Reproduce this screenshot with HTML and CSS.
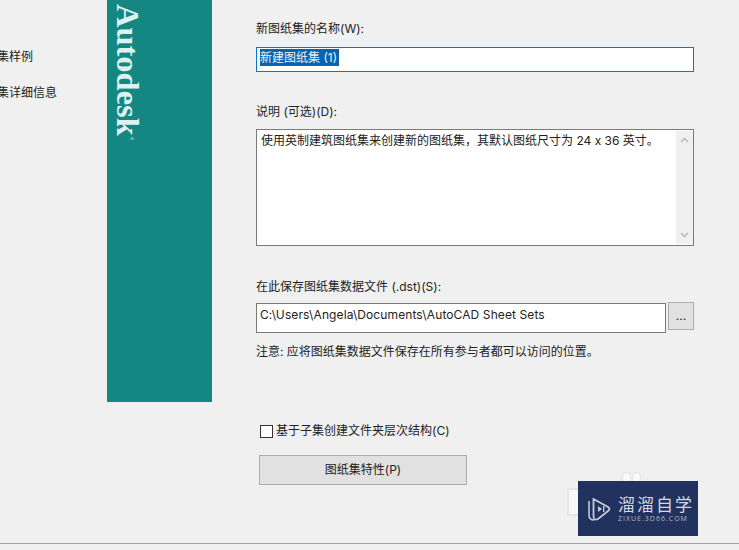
FILE: index.html
```html
<!DOCTYPE html>
<html lang="zh">
<head>
    <meta charset="UTF-8">
    <meta name="viewport" content="width=device-width, initial-scale=1.0">
    <title>创建图纸集</title>
    <link rel="stylesheet" href="styles.css">
</head>
<body>
    <div class="dialog">
        <div class="steps">
            <div class="step step-first">图纸集样例</div>
            <div class="step">图纸集详细信息</div>
        </div>

        <div class="banner">
            <span class="brand">Autodesk<sup class="reg">®</sup></span>
        </div>

        <div class="form">
            <label class="field-label label-name">新图纸集的名称(W):</label>
            <div class="name-input"><span class="selected">新建图纸集 (1)</span></div>

            <label class="field-label label-desc">说明 (可选)(D):</label>
            <div class="desc-box">
                <div class="desc-text">使用英制建筑图纸集来创建新的图纸集，其默认图纸尺寸为 24 x 36 英寸。</div>
                <div class="scrollbar">
                    <svg width="9" height="6" viewBox="0 0 9 6"><path d="M1 5 L4.5 1.5 L8 5" fill="none" stroke="#b4b4b4" stroke-width="1.4"/></svg>
                    <svg width="9" height="6" viewBox="0 0 9 6"><path d="M1 1 L4.5 4.5 L8 1" fill="none" stroke="#b4b4b4" stroke-width="1.4"/></svg>
                </div>
            </div>

            <label class="field-label label-path">在此保存图纸集数据文件 (.dst)(S):</label>
            <div class="path-row">
                <div class="path-input">C:\Users\Angela\Documents\AutoCAD Sheet Sets</div>
                <button class="browse">...</button>
            </div>
            <p class="note">注意: 应将图纸集数据文件保存在所有参与者都可以访问的位置。</p>

            <div class="check-row">
                <span class="checkbox"></span>
                <span>基于子集创建文件夹层次结构(C)</span>
            </div>
            <button class="props">图纸集特性(P)</button>
        </div>
    </div>

    <div class="footer-line"></div>

    <!-- watermark over the screenshot -->
    <div class="ghost-mark"></div>
    <div class="ghost-ears"><span></span><span></span></div>
    <div class="watermark">
        <svg width="26" height="28" viewBox="0 0 26 28">
            <path d="M3 6 V20 Q3 25 8 25" fill="none" stroke="#c4c9d6" stroke-width="1.6"/>
            <path d="M7.5 4 L22 12 Q25 14 22 16 L12 24 Q7.5 26 7.5 21 Z" fill="none" stroke="#c4c9d6" stroke-width="1.8"/>
            <path d="M12 11 L16 14 L12 17 Z" fill="#c4c9d6"/>
            <rect x="17" y="11" width="1.4" height="6" fill="#c4c9d6"/>
        </svg>
        <div class="wm-text">
            <div class="wm-title">溜溜自学</div>
            <div class="wm-url">ZIXUE.3D66.COM</div>
        </div>
    </div>
</body>
</html>
```

FILE: styles.css
```css
html, body {
    margin: 0;
    height: 550px;
    overflow: hidden;
}
body {
    position: relative;
    font-family: "Inter", "Noto Sans CJK SC", sans-serif;
    font-size: 12px;
    color: #222;
    background-color: #f0f0f0;
}
.dialog {
    display: flex;
    height: 543px;
}
.steps {
    width: 107px;
    flex-shrink: 0;
    overflow: hidden;
}
.step {
    margin-left: -27px;
    line-height: 16px;
    white-space: nowrap;
}
.step-first {
    margin-top: 49px;
    margin-bottom: 20px;
}
.banner {
    width: 105px;
    height: 402px;
    flex-shrink: 0;
    background-color: #158783;
    overflow: hidden;
}
.brand {
    display: block;
    writing-mode: vertical-rl;
    margin: 4px 0 0 5px;
    font-family: "Liberation Serif", serif;
    font-weight: bold;
    font-size: 32.5px;
    line-height: 32px;
    color: #dff1ef;
    white-space: nowrap;
}
.reg {
    font-size: 6px;
    font-weight: normal;
    line-height: 0;
    vertical-align: 4px;
}
.form {
    flex: 1;
    padding-left: 44px;
    padding-right: 45px;
}
.field-label {
    display: block;
    line-height: 16px;
}
.label-name {
    margin-top: 21px;
}
.name-input {
    height: 25px;
    margin-top: 10px;
    padding-left: 3px;
    box-sizing: border-box;
    border: 1px solid #0078d7;
    background-color: #fff;
    line-height: 20px;
}
.selected {
    display: inline-block;
    padding-right: 2px;
    background-color: #0a64ad;
    color: #e8f2fb;
    height: 17px;
    line-height: 17px;
}
.label-desc {
    margin-top: 32px;
}
.desc-box {
    display: flex;
    height: 117px;
    margin-top: 9px;
    box-sizing: border-box;
    border: 1px solid #7a7a7a;
    background-color: #fff;
}
.desc-text {
    flex: 1;
    padding: 3px 4px;
    line-height: 16px;
    white-space: nowrap;
}
.scrollbar {
    width: 17px;
    margin: 1px 0;
    padding: 6px 0;
    display: flex;
    flex-direction: column;
    justify-content: space-between;
    align-items: center;
    box-sizing: border-box;
    background-color: #f0f0f0;
}
.label-path {
    margin-top: 33px;
}
.path-row {
    display: flex;
    align-items: flex-start;
    gap: 2px;
    margin-top: 8px;
}
.path-input {
    flex: 1;
    height: 30px;
    box-sizing: border-box;
    padding: 2px 3px;
    border: 1px solid #7a7a7a;
    background-color: #fff;
    line-height: 18px;
    letter-spacing: 0.1px;
}
.browse {
    width: 26px;
    height: 28px;
    margin-top: -1px;
    padding: 0 0 2px;
    border: 1px solid #adadad;
    background-color: #e1e1e1;
    font: inherit;
    color: #222;
}
.note {
    margin: 11px 0 0;
    line-height: 16px;
}
.check-row {
    display: flex;
    align-items: center;
    gap: 3px;
    margin-top: 63px;
    margin-left: 4px;
    line-height: 16px;
}
.checkbox {
    width: 11px;
    height: 11px;
    border: 1px solid #333;
    background-color: #fff;
}
.props {
    display: block;
    width: 208px;
    height: 30px;
    margin-top: 16px;
    margin-left: 3px;
    padding: 0 0 3px;
    border: 1px solid #adadad;
    background-color: #e1e1e1;
    font: inherit;
    color: #222;
}
.footer-line {
    height: 1px;
    background-color: #a0a0a0;
}
.ghost-mark {
    position: absolute;
    left: 567px;
    top: 488px;
    width: 12px;
    height: 24px;
    border: 2px solid #e6e6e6;
    background-color: #f7f7f7;
}
.ghost-ears {
    position: absolute;
    left: 622px;
    top: 472px;
    display: flex;
    gap: 1px;
}
.ghost-ears span {
    width: 9px;
    height: 11px;
    box-sizing: border-box;
    border: 1px solid #e2e2e2;
    border-radius: 50%;
    background-color: #fafafa;
}
.watermark {
    position: absolute;
    left: 578px;
    top: 481px;
    width: 120px;
    height: 55px;
    padding-left: 8px;
    box-sizing: border-box;
    display: flex;
    align-items: center;
    gap: 6px;
    background-color: #20325d;
    color: #d4d8e2;
}
.wm-title {
    font-family: "Noto Sans CJK SC", sans-serif;
    font-size: 17px;
    line-height: 19px;
    letter-spacing: 2px;
}
.wm-url {
    margin-top: 2px;
    font-family: "Open Sans", sans-serif;
    font-size: 7px;
    line-height: 8px;
    letter-spacing: 1px;
    color: #b4bac9;
}
```
